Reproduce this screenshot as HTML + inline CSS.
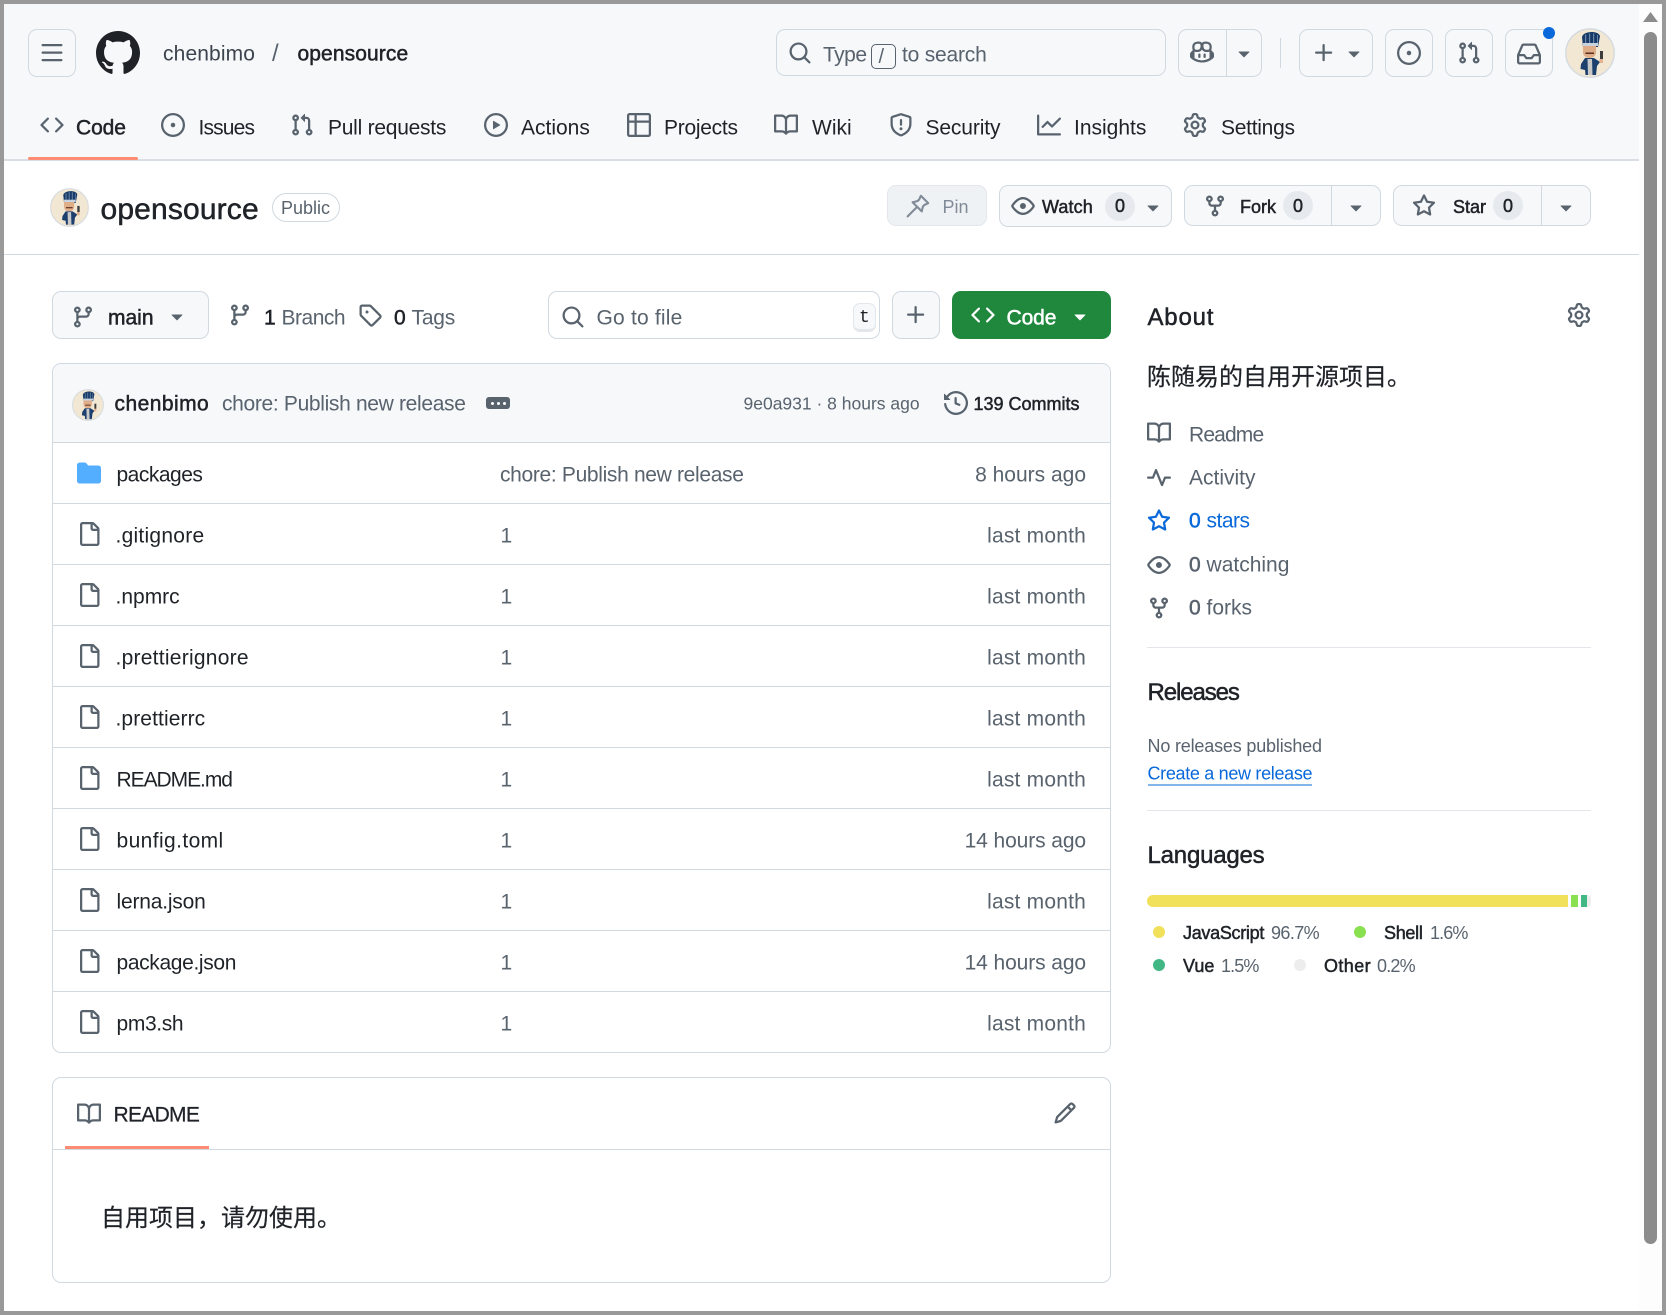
<!DOCTYPE html>
<html lang="en"><head><meta charset="utf-8"><title>opensource</title>
<style>
html,body{margin:0;padding:0;width:1666px;height:1315px;overflow:hidden;background:#fff}
body{position:relative;font-family:"Liberation Sans","Noto Sans CJK SC",sans-serif;color:#1f2328;font-size:21px}
.r{position:absolute;box-sizing:border-box}
.b{position:absolute;box-sizing:border-box;border:1.5px solid #d1d9e0;border-radius:9px;background:#f6f8fa}
.t{position:absolute;white-space:nowrap;line-height:1;transform:translateY(-50%)}
.s{-webkit-text-stroke:.5px currentColor}
.m{color:#59636e}
.bl{color:#0969da}
svg.i{position:absolute;width:24px;height:24px;fill:#59636e;overflow:visible}
.ln{position:absolute;height:1px;background:#d1d9e0}
.pill{position:absolute;background:#e6eaef;border-radius:15px}
.cn{font-family:"Noto Sans CJK SC","Liberation Sans",sans-serif;-webkit-text-stroke:.2px currentColor}
.dot{position:absolute;width:12px;height:12px;border-radius:50%}
.sm{font-size:18px}
</style></head><body>
<svg width="0" height="0" style="position:absolute">
<defs>
<symbol id="code" viewBox="0 0 16 16"><path d="m11.28 3.22 4.25 4.25a.75.75 0 0 1 0 1.06l-4.25 4.25a.749.749 0 0 1-1.275-.326.749.749 0 0 1 .215-.734L13.94 8l-3.72-3.72a.749.749 0 0 1 .326-1.275.749.749 0 0 1 .734.215Zm-6.56 0a.751.751 0 0 1 1.042.018.751.751 0 0 1 .018 1.042L2.06 8l3.72 3.72a.749.749 0 0 1-.326 1.275.749.749 0 0 1-.734-.215L.47 8.53a.75.75 0 0 1 0-1.06Z"/></symbol>
<symbol id="issue" viewBox="0 0 16 16"><path d="M8 9.5a1.5 1.5 0 1 0 0-3 1.5 1.5 0 0 0 0 3Z"/><path d="M8 0a8 8 0 1 1 0 16A8 8 0 0 1 8 0ZM1.5 8a6.5 6.5 0 1 0 13 0 6.5 6.5 0 0 0-13 0Z"/></symbol>
<symbol id="pr" viewBox="0 0 16 16"><path d="M1.5 3.25a2.25 2.25 0 1 1 3 2.122v5.256a2.251 2.251 0 1 1-1.5 0V5.372A2.25 2.25 0 0 1 1.5 3.25Zm5.677-.177L9.573.677A.25.25 0 0 1 10 .854V2.5h1A2.5 2.5 0 0 1 13.5 5v5.628a2.251 2.251 0 1 1-1.5 0V5a1 1 0 0 0-1-1h-1v1.646a.25.25 0 0 1-.427.177L7.177 3.427a.25.25 0 0 1 0-.354ZM3.75 2.5a.75.75 0 1 0 0 1.5.75.75 0 0 0 0-1.5Zm0 9.5a.75.75 0 1 0 0 1.5.75.75 0 0 0 0-1.5Zm8.25.75a.75.75 0 1 0 1.5 0 .75.75 0 0 0-1.5 0Z"/></symbol>
<symbol id="play" viewBox="0 0 16 16"><path d="M8 0a8 8 0 1 1 0 16A8 8 0 0 1 8 0ZM1.5 8a6.5 6.5 0 1 0 13 0 6.5 6.5 0 0 0-13 0Zm4.879-2.773 4.264 2.559a.25.25 0 0 1 0 .428l-4.264 2.559A.25.25 0 0 1 6 10.559V5.442a.25.25 0 0 1 .379-.215Z"/></symbol>
<symbol id="table" viewBox="0 0 16 16"><path d="M0 1.75C0 .784.784 0 1.75 0h12.5C15.216 0 16 .784 16 1.75v12.5A1.75 1.75 0 0 1 14.25 16H1.75A1.75 1.75 0 0 1 0 14.25ZM6.5 6.5v8h7.75a.25.25 0 0 0 .25-.25V6.5Zm8-1.5V1.75a.25.25 0 0 0-.25-.25H6.5V5Zm-13 1.5v7.75c0 .138.112.25.25.25H5v-8ZM5 5V1.5H1.75a.25.25 0 0 0-.25.25V5Z"/></symbol>
<symbol id="book" viewBox="0 0 16 16"><path d="M0 1.75A.75.75 0 0 1 .75 1h4.253c1.227 0 2.317.59 3 1.501A3.743 3.743 0 0 1 11.006 1h4.245a.75.75 0 0 1 .75.75v10.5a.75.75 0 0 1-.75.75h-4.507a2.25 2.25 0 0 0-1.591.659l-.622.621a.75.75 0 0 1-1.06 0l-.622-.621A2.25 2.25 0 0 0 5.258 13H.75a.75.75 0 0 1-.75-.75Zm7.251 10.324.004-5.073-.002-2.253A2.25 2.25 0 0 0 5.003 2.5H1.5v9h3.757a3.75 3.75 0 0 1 1.994.574ZM8.755 4.75l-.004 7.322a3.752 3.752 0 0 1 1.992-.572H14.5v-9h-3.495a2.25 2.25 0 0 0-2.25 2.25Z"/></symbol>
<symbol id="shield" viewBox="0 0 16 16"><path d="M7.467.133a1.748 1.748 0 0 1 1.066 0l5.25 1.68A1.75 1.75 0 0 1 15 3.48V7c0 1.566-.32 3.182-1.303 4.682-.983 1.498-2.585 2.813-5.032 3.855a1.697 1.697 0 0 1-1.33 0c-2.447-1.042-4.049-2.357-5.032-3.855C1.32 10.182 1 8.566 1 7V3.48a1.75 1.75 0 0 1 1.217-1.667Zm.61 1.429a.25.25 0 0 0-.153 0l-5.25 1.68a.25.25 0 0 0-.174.238V7c0 1.358.275 2.666 1.057 3.86.784 1.194 2.121 2.34 4.366 3.297a.196.196 0 0 0 .154 0c2.245-.956 3.582-2.104 4.366-3.298C13.225 9.666 13.5 8.36 13.5 7V3.48a.251.251 0 0 0-.174-.237l-5.25-1.68ZM8.75 4.75v3a.75.75 0 0 1-1.5 0v-3a.75.75 0 0 1 1.5 0ZM9 10.5a1 1 0 1 1-2 0 1 1 0 0 1 2 0Z"/></symbol>
<symbol id="graph" viewBox="0 0 16 16"><path d="M1.5 1.75V13.5h13.75a.75.75 0 0 1 0 1.5H.75a.75.75 0 0 1-.75-.75V1.75a.75.75 0 0 1 1.5 0Zm14.28 2.53-5.25 5.25a.75.75 0 0 1-1.06 0L7 7.06 4.28 9.78a.751.751 0 0 1-1.042-.018.751.751 0 0 1-.018-1.042l3.25-3.25a.75.75 0 0 1 1.06 0L10 7.94l4.72-4.72a.751.751 0 0 1 1.042.018.751.751 0 0 1 .018 1.042Z"/></symbol>
<symbol id="gear" viewBox="0 0 16 16"><path d="M8 0a8.2 8.2 0 0 1 .701.031C9.444.095 9.99.645 10.16 1.29l.288 1.107c.018.066.079.158.212.224.231.114.454.243.668.386.123.082.233.09.299.071l1.103-.303c.644-.176 1.392.021 1.82.63.27.385.506.792.704 1.218.315.675.111 1.422-.364 1.891l-.814.806c-.049.048-.098.147-.088.294.016.257.016.515 0 .772-.01.147.038.246.088.294l.814.806c.475.469.679 1.216.364 1.891a7.977 7.977 0 0 1-.704 1.217c-.428.61-1.176.807-1.82.63l-1.102-.302c-.067-.019-.177-.011-.3.071a5.909 5.909 0 0 1-.668.386c-.133.066-.194.158-.211.224l-.29 1.106c-.168.646-.715 1.196-1.458 1.26a8.006 8.006 0 0 1-1.402 0c-.743-.064-1.289-.614-1.458-1.26l-.289-1.106c-.018-.066-.079-.158-.212-.224a5.738 5.738 0 0 1-.668-.386c-.123-.082-.233-.09-.299-.071l-1.103.303c-.644.176-1.392-.021-1.82-.63a8.12 8.12 0 0 1-.704-1.218c-.315-.675-.111-1.422.363-1.891l.815-.806c.05-.048.098-.147.088-.294a6.214 6.214 0 0 1 0-.772c.01-.147-.038-.246-.088-.294l-.815-.806C.635 6.045.431 5.298.746 4.623a7.92 7.92 0 0 1 .704-1.217c.428-.61 1.176-.807 1.82-.63l1.102.302c.067.019.177.011.3-.071.214-.143.437-.272.668-.386.133-.066.194-.158.211-.224l.29-1.106C6.009.645 6.556.095 7.299.03 7.53.01 7.764 0 8 0Zm-.571 1.525c-.036.003-.108.036-.137.146l-.289 1.105c-.147.561-.549.967-.998 1.189-.173.086-.34.183-.5.29-.417.278-.97.423-1.529.27l-1.103-.303c-.109-.03-.175.016-.195.045-.22.312-.412.644-.573.99-.014.031-.021.11.059.19l.815.806c.411.406.562.957.53 1.456a4.709 4.709 0 0 0 0 .582c.032.499-.119 1.05-.53 1.456l-.815.806c-.081.08-.073.159-.059.19.162.346.353.677.573.989.02.03.085.076.195.046l1.102-.303c.56-.153 1.113-.008 1.53.27.161.107.328.204.501.29.447.222.85.629.997 1.189l.289 1.105c.029.109.101.143.137.146a6.6 6.6 0 0 0 1.142 0c.036-.003.108-.036.137-.146l.289-1.105c.147-.561.549-.967.998-1.189.173-.086.34-.183.5-.29.417-.278.97-.423 1.529-.27l1.103.303c.109.029.175-.016.195-.045.22-.313.411-.644.573-.99.014-.031.021-.11-.059-.19l-.815-.806c-.411-.406-.562-.957-.53-1.456a4.709 4.709 0 0 0 0-.582c-.032-.499.119-1.05.53-1.456l.815-.806c.081-.08.073-.159.059-.19a6.464 6.464 0 0 0-.573-.989c-.02-.03-.085-.076-.195-.046l-1.102.303c-.56.153-1.113.008-1.53-.27a4.44 4.44 0 0 0-.501-.29c-.447-.222-.85-.629-.997-1.189l-.289-1.105c-.029-.11-.101-.143-.137-.146a6.6 6.6 0 0 0-1.142 0ZM11 8a3 3 0 1 1-6 0 3 3 0 0 1 6 0ZM9.5 8a1.5 1.5 0 1 0-3.001.001A1.5 1.5 0 0 0 9.5 8Z"/></symbol>
<symbol id="gh" viewBox="0 0 16 16"><path d="M8 0c4.42 0 8 3.58 8 8a8.013 8.013 0 0 1-5.45 7.59c-.4.08-.55-.17-.55-.38 0-.27.01-1.13.01-2.2 0-.75-.25-1.23-.54-1.48 1.78-.2 3.65-.88 3.65-3.95 0-.88-.31-1.59-.82-2.15.08-.2.36-1.02-.08-2.12 0 0-.67-.22-2.2.82-.64-.18-1.32-.27-2-.27-.68 0-1.36.09-2 .27-1.53-1.03-2.2-.82-2.2-.82-.44 1.1-.16 1.92-.08 2.12-.51.56-.82 1.28-.82 2.15 0 3.06 1.86 3.75 3.64 3.95-.23.2-.44.55-.51 1.07-.46.21-1.61.55-2.33-.66-.15-.24-.6-.83-1.23-.82-.67.01-.27.38.01.53.34.19.73.9.82 1.13.16.45.68 1.31 2.69.94 0 .67.01 1.3.01 1.49 0 .21-.15.45-.55.38A7.995 7.995 0 0 1 0 8c0-4.42 3.58-8 8-8Z"/></symbol>
<symbol id="bars" viewBox="0 0 16 16"><path d="M1 2.75A.75.75 0 0 1 1.75 2h12.5a.75.75 0 0 1 0 1.5H1.75A.75.75 0 0 1 1 2.75Zm0 5A.75.75 0 0 1 1.75 7h12.5a.75.75 0 0 1 0 1.5H1.75A.75.75 0 0 1 1 7.75ZM1.75 12h12.5a.75.75 0 0 1 0 1.5H1.75a.75.75 0 0 1 0-1.5Z"/></symbol>
<symbol id="search" viewBox="0 0 16 16"><path d="M10.68 11.74a6 6 0 0 1-7.922-8.982 6 6 0 0 1 8.982 7.922l3.04 3.04a.749.749 0 0 1-.326 1.275.749.749 0 0 1-.734-.215ZM11.5 7a4.499 4.499 0 1 0-8.997 0A4.499 4.499 0 0 0 11.5 7Z"/></symbol>
<symbol id="copilot" viewBox="0 0 16 16"><path d="M7.998 15.035c-4.562 0-7.873-2.914-7.998-3.749V9.338c.085-.628.677-1.686 1.588-2.065.013-.07.024-.143.036-.218.029-.183.06-.384.126-.612-.201-.508-.254-1.084-.254-1.656 0-.87.128-1.769.693-2.484.579-.733 1.494-1.124 2.724-1.261 1.206-.134 2.262.034 2.944.765.05.053.096.108.139.165.044-.057.094-.112.143-.165.682-.731 1.738-.899 2.944-.765 1.23.137 2.145.528 2.724 1.261.566.715.693 1.614.693 2.484 0 .572-.053 1.148-.254 1.656.066.228.098.429.126.612.012.076.024.148.037.218.924.385 1.522 1.471 1.591 2.095v1.872c0 .766-3.351 3.795-8.002 3.795Zm0-1.485c2.28 0 4.584-1.11 5.002-1.433V7.862l-.023-.116c-.49.21-1.075.291-1.727.291-1.146 0-2.059-.327-2.71-.991A3.222 3.222 0 0 1 8 6.303a3.24 3.24 0 0 1-.544.743c-.65.664-1.563.991-2.71.991-.652 0-1.236-.081-1.727-.291l-.023.116v4.255c.419.323 2.722 1.433 5.002 1.433ZM6.762 2.83c-.193-.206-.637-.413-1.682-.297-1.019.113-1.479.404-1.713.7-.247.312-.369.789-.369 1.554 0 .793.129 1.171.308 1.371.162.181.519.379 1.442.379.853 0 1.339-.235 1.638-.54.315-.322.527-.827.617-1.553.117-.935-.037-1.395-.241-1.614Zm4.155-.297c-1.044-.116-1.488.091-1.681.297-.204.219-.359.679-.242 1.614.091.726.303 1.231.618 1.553.299.305.784.54 1.638.54.922 0 1.28-.198 1.442-.379.179-.2.308-.578.308-1.371 0-.765-.123-1.242-.37-1.554-.233-.296-.693-.587-1.713-.7Z"/><path d="M6.25 9.037a.75.75 0 0 1 .75.75v1.501a.75.75 0 0 1-1.5 0V9.787a.75.75 0 0 1 .75-.75Zm4.25.75v1.501a.75.75 0 0 1-1.5 0V9.787a.75.75 0 0 1 1.5 0Z"/></symbol>
<symbol id="plus" viewBox="0 0 16 16"><path d="M7.75 2a.75.75 0 0 1 .75.75V7h4.25a.75.75 0 0 1 0 1.5H8.5v4.25a.75.75 0 0 1-1.5 0V8.5H2.75a.75.75 0 0 1 0-1.5H7V2.75A.75.75 0 0 1 7.75 2Z"/></symbol>
<symbol id="inbox" viewBox="0 0 16 16"><path d="M2.8 2.06A1.75 1.75 0 0 1 4.41 1h7.18c.7 0 1.333.417 1.61 1.06l2.74 6.395c.04.093.06.194.06.295v4.5A1.75 1.75 0 0 1 14.25 15H1.75A1.75 1.75 0 0 1 0 13.25v-4.5c0-.101.02-.202.06-.295Zm1.61.44a.25.25 0 0 0-.23.152L1.887 8H4.75a.75.75 0 0 1 .6.3L6.625 10h2.75l1.275-1.7a.75.75 0 0 1 .6-.3h2.863L11.82 2.652a.25.25 0 0 0-.23-.152Zm10.09 7h-2.875l-1.275 1.7a.75.75 0 0 1-.6.3h-3.5a.75.75 0 0 1-.6-.3L4.375 9.5H1.5v3.75c0 .138.112.25.25.25h12.5a.25.25 0 0 0 .25-.25Z"/></symbol>
<symbol id="pin" viewBox="0 0 16 16"><path fill="none" stroke="#818b98" stroke-width="1.4" stroke-linecap="round" stroke-linejoin="round" d="M9.9 1.2 14.8 6.1 12.6 7.1C11.8 7.5 11.3 8.2 11.1 9L10.5 11.6 4.4 5.5 7 4.9C7.8 4.7 8.5 4.2 8.9 3.4ZM7.4 8.6 1.1 14.9"/></symbol>
<symbol id="eye" viewBox="0 0 16 16"><path d="M8 2c1.981 0 3.671.992 4.933 2.078 1.27 1.091 2.187 2.345 2.637 3.023a1.62 1.62 0 0 1 0 1.798c-.45.678-1.367 1.932-2.637 3.023C11.67 13.008 9.981 14 8 14c-1.981 0-3.671-.992-4.933-2.078C1.797 10.83.88 9.576.43 8.898a1.62 1.62 0 0 1 0-1.798c.45-.677 1.367-1.931 2.637-3.022C4.33 2.992 6.019 2 8 2ZM1.679 7.932a.12.12 0 0 0 0 .136c.411.622 1.241 1.75 2.366 2.717C5.176 11.758 6.527 12.5 8 12.5c1.473 0 2.825-.742 3.955-1.715 1.124-.967 1.954-2.096 2.366-2.717a.12.12 0 0 0 0-.136c-.412-.621-1.242-1.75-2.366-2.717C10.824 4.242 9.473 3.5 8 3.5c-1.473 0-2.825.742-3.955 1.715-1.124.967-1.954 2.096-2.366 2.717ZM8 10a2 2 0 1 1-.001-3.999A2 2 0 0 1 8 10Z"/></symbol>
<symbol id="fork" viewBox="0 0 16 16"><path d="M5 5.372v.878c0 .414.336.75.75.75h4.5a.75.75 0 0 0 .75-.75v-.878a2.25 2.25 0 1 1 1.5 0v.878a2.25 2.25 0 0 1-2.25 2.25h-1.5v2.128a2.251 2.251 0 1 1-1.5 0V8.5h-1.5A2.25 2.25 0 0 1 3.5 6.25v-.878a2.25 2.25 0 1 1 1.5 0ZM5 3.25a.75.75 0 1 0-1.5 0 .75.75 0 0 0 1.5 0Zm6.75.75a.75.75 0 1 0 0-1.5.75.75 0 0 0 0 1.5Zm-3 8.75a.75.75 0 1 0-1.5 0 .75.75 0 0 0 1.5 0Z"/></symbol>
<symbol id="star" viewBox="0 0 16 16"><path d="M8 .25a.75.75 0 0 1 .673.418l1.882 3.815 4.21.612a.75.75 0 0 1 .416 1.279l-3.046 2.97.719 4.192a.751.751 0 0 1-1.088.791L8 12.347l-3.766 1.98a.75.75 0 0 1-1.088-.79l.72-4.194L.818 6.374a.75.75 0 0 1 .416-1.28l4.21-.611L7.327.668A.75.75 0 0 1 8 .25Zm0 2.445L6.615 5.5a.75.75 0 0 1-.564.41l-3.097.45 2.24 2.184a.75.75 0 0 1 .216.664l-.528 3.084 2.769-1.456a.75.75 0 0 1 .698 0l2.77 1.456-.53-3.084a.75.75 0 0 1 .216-.664l2.24-2.183-3.096-.45a.75.75 0 0 1-.564-.41L8 2.694Z"/></symbol>
<symbol id="branch" viewBox="0 0 16 16"><path d="M9.5 3.25a2.25 2.25 0 1 1 3 2.122V6A2.5 2.5 0 0 1 10 8.5H6a1 1 0 0 0-1 1v1.128a2.251 2.251 0 1 1-1.5 0V5.372a2.25 2.25 0 1 1 1.5 0v1.836A2.493 2.493 0 0 1 6 7h4a1 1 0 0 0 1-1v-.628A2.25 2.25 0 0 1 9.5 3.25Zm-6 0a.75.75 0 1 0 1.5 0 .75.75 0 0 0-1.5 0Zm8.25-.75a.75.75 0 1 0 0 1.5.75.75 0 0 0 0-1.5ZM4.25 12a.75.75 0 1 0 0 1.5.75.75 0 0 0 0-1.5Z"/></symbol>
<symbol id="tag" viewBox="0 0 16 16"><path d="M1 7.775V2.75C1 1.784 1.784 1 2.75 1h5.025c.464 0 .91.184 1.238.513l6.25 6.25a1.75 1.75 0 0 1 0 2.474l-5.026 5.026a1.75 1.75 0 0 1-2.474 0l-6.25-6.25A1.752 1.752 0 0 1 1 7.775Zm1.5 0c0 .066.026.13.073.177l6.25 6.25a.25.25 0 0 0 .354 0l5.025-5.025a.25.25 0 0 0 0-.354l-6.25-6.25a.25.25 0 0 0-.177-.073H2.75a.25.25 0 0 0-.25.25ZM6 5a1 1 0 1 1 0 2 1 1 0 0 1 0-2Z"/></symbol>
<symbol id="history" viewBox="0 0 16 16"><path d="m.427 1.927 1.215 1.215a8.002 8.002 0 1 1-1.6 5.685.75.75 0 1 1 1.493-.154 6.5 6.5 0 1 0 1.18-4.458l1.358 1.358A.25.25 0 0 1 3.896 6H.25A.25.25 0 0 1 0 5.75V2.104a.25.25 0 0 1 .427-.177ZM7.75 4a.75.75 0 0 1 .75.75v2.992l2.028.812a.75.75 0 0 1-.557 1.392l-2.5-1A.751.751 0 0 1 7 8.25v-3.5A.75.75 0 0 1 7.75 4Z"/></symbol>
<symbol id="folder" viewBox="0 0 16 16"><path fill="#54aeff" d="M1.75 1A1.75 1.75 0 0 0 0 2.75v10.5C0 14.216.784 15 1.75 15h12.5A1.75 1.75 0 0 0 16 13.25v-8.5A1.75 1.75 0 0 0 14.25 3H7.5a.25.25 0 0 1-.2-.1l-.9-1.2C6.07 1.26 5.55 1 5 1H1.75Z"/></symbol>
<symbol id="file" viewBox="0 0 16 16"><path d="M2 1.75C2 .784 2.784 0 3.75 0h6.586c.464 0 .909.184 1.237.513l2.914 2.914c.329.328.513.773.513 1.237v9.586A1.75 1.75 0 0 1 13.25 16h-9.5A1.75 1.75 0 0 1 2 14.25Zm1.75-.25a.25.25 0 0 0-.25.25v12.5c0 .138.112.25.25.25h9.5a.25.25 0 0 0 .25-.25V6h-2.75A1.75 1.75 0 0 1 9 4.25V1.5Zm6.75.062V4.25c0 .138.112.25.25.25h2.688l-.011-.013-2.914-2.914-.013-.011Z"/></symbol>
<symbol id="pulse" viewBox="0 0 16 16"><path d="M6 2c.306 0 .582.187.696.471L10 10.731l1.304-3.26A.751.751 0 0 1 12 7h3.25a.75.75 0 0 1 0 1.5h-2.742l-1.812 4.528a.751.751 0 0 1-1.392 0L6 4.77 4.696 8.03A.75.75 0 0 1 4 8.5H.75a.75.75 0 0 1 0-1.5h2.742l1.812-4.529A.751.751 0 0 1 6 2Z"/></symbol>
<symbol id="pencil" viewBox="0 0 16 16"><path d="M11.013 1.427a1.75 1.75 0 0 1 2.474 0l1.086 1.086a1.75 1.75 0 0 1 0 2.474l-8.61 8.61c-.21.21-.47.364-.756.445l-3.251.93a.75.75 0 0 1-.927-.928l.929-3.25c.081-.286.235-.547.445-.758l8.61-8.61Zm.176 4.823L9.75 4.81l-6.286 6.287a.253.253 0 0 0-.064.108l-.558 1.953 1.953-.558a.253.253 0 0 0 .108-.064Zm1.238-3.763a.25.25 0 0 0-.354 0L10.811 3.75l1.439 1.44 1.263-1.263a.25.25 0 0 0 0-.354Z"/></symbol>
<symbol id="caret" viewBox="0 0 16 16"><path d="m4.427 7.427 3.396 3.396a.25.25 0 0 0 .354 0l3.396-3.396A.25.25 0 0 0 11.396 7H4.604a.25.25 0 0 0-.177.427Z"/></symbol>
<symbol id="av" viewBox="0 0 50 50">
<circle cx="25" cy="25" r="24.2" fill="#f2e7d3" stroke="#d5dae0" stroke-width="1.4"/>
<path fill="#173a68" d="M17 9C18 3 33 2 35 8L33 19H18Z"/>
<path fill="#6d87a8" d="M20 6.5h1.2V15H20ZM24 5.5h1.2V15H24ZM28 5.5h1.2V15H28ZM32 7h1V15h-1Z"/>
<path fill="#c9d3df" d="M18 15H33V18H18Z"/>
<path fill="#dfae88" d="M18 18H31V25C30 29 27 30 24.5 30 22 30 19 29 18 25Z"/>
<path fill="#5a2f22" d="M20.5 24.5H29V26H20.5Z"/>
<path fill="#1c3f6e" d="M20 30 16 36 15.500 41 20 42 20.500 47H31L32 38 35 34 29 30Z"/>
<path fill="#c8c8c8" d="M22.500 31H27L27.500 47H23Z"/>
<path fill="#3c3c3c" d="M35 23H38V31H35Z"/>
<path fill="#e3b48f" d="M34.500 31H38V35H34.500Z"/>
</symbol>
</defs></svg>

<!-- header bg -->
<div class="r" style="left:4px;top:4px;width:1635px;height:155px;background:#f6f8fa"></div>
<div class="ln" style="left:4px;top:159px;width:1635px;height:2px;background:#d8dee4"></div>
<div class="r" style="left:28px;top:157px;width:110px;height:3px;background:#fd8c73;border-radius:2px"></div>

<!-- top row -->
<div class="b" style="left:28px;top:29px;width:48px;height:48px"></div>
<svg class="i" viewBox="0 0 16 16" style="left:40px;top:41px"><use href="#bars"/></svg>
<svg class="i" viewBox="0 0 16 16" style="left:96px;top:31px;width:44px;height:44px;fill:#1f2328"><use href="#gh"/></svg>
<span class="t" style="left:163px;top:54px;color:#3c444d;letter-spacing:.13px">chenbimo</span>
<span class="t" style="left:272px;top:54px;color:#59636e;font-size:24px">/</span>
<span class="t s" style="left:297.5px;top:54px;letter-spacing:.1px">opensource</span>

<div class="b" style="left:776px;top:29px;width:390px;height:47px;border-radius:9px"></div>
<svg class="i" viewBox="0 0 16 16" style="left:788px;top:41px"><use href="#search"/></svg>
<span class="t m" style="left:823px;top:55px;letter-spacing:-.5px">Type</span>
<div class="r" style="left:871px;top:44px;width:25px;height:25px;border:1.5px solid #59636e;border-radius:5px"></div>
<span class="t m" style="left:878.500px;top:56.500px;font-size:20px">/</span>
<span class="t m" style="left:902px;top:55px;letter-spacing:-.2px">to search</span>

<div class="b" style="left:1178px;top:29px;width:84px;height:48px"></div>
<div class="r" style="left:1226px;top:29px;width:1px;height:48px;background:#d1d9e0"></div>
<svg class="i" viewBox="0 0 16 16" style="left:1190px;top:40px"><use href="#copilot"/></svg>
<svg class="i" viewBox="0 0 16 16" style="left:1232px;top:41px"><use href="#caret"/></svg>
<div class="r" style="left:1280px;top:38px;width:1px;height:30px;background:#d1d9e0"></div>
<div class="b" style="left:1299px;top:29px;width:74px;height:48px"></div>
<svg class="i" viewBox="0 0 16 16" style="left:1312px;top:41px"><use href="#plus"/></svg>
<svg class="i" viewBox="0 0 16 16" style="left:1342px;top:41px"><use href="#caret"/></svg>
<div class="b" style="left:1385px;top:29px;width:48px;height:48px"></div>
<svg class="i" viewBox="0 0 16 16" style="left:1397px;top:41px"><use href="#issue"/></svg>
<div class="b" style="left:1445px;top:29px;width:48px;height:48px"></div>
<svg class="i" viewBox="0 0 16 16" style="left:1457px;top:41px"><use href="#pr"/></svg>
<div class="b" style="left:1505px;top:29px;width:48px;height:48px"></div>
<svg class="i" viewBox="0 0 16 16" style="left:1517px;top:42px"><use href="#inbox"/></svg>
<div class="r" style="left:1543px;top:27px;width:12px;height:12px;border-radius:50%;background:#0969da"></div>
<svg class="i" viewBox="0 0 50 50" style="left:1565px;top:28px;width:50px;height:50px"><use href="#av"/></svg>

<!-- tabs -->
<svg class="i" viewBox="0 0 16 16" style="left:40px;top:113px"><use href="#code"/></svg>
<span class="t s" style="left:76px;top:127.500px;letter-spacing:-.1px">Code</span>
<svg class="i" viewBox="0 0 16 16" style="left:161px;top:113px"><use href="#issue"/></svg>
<span class="t" style="left:198.500px;top:127.500px;letter-spacing:-.85px">Issues</span>
<svg class="i" viewBox="0 0 16 16" style="left:290px;top:113px"><use href="#pr"/></svg>
<span class="t" style="left:328px;top:127.500px;letter-spacing:-.25px">Pull requests</span>
<svg class="i" viewBox="0 0 16 16" style="left:484px;top:113px"><use href="#play"/></svg>
<span class="t" style="left:521px;top:127.500px">Actions</span>
<svg class="i" viewBox="0 0 16 16" style="left:627px;top:113px"><use href="#table"/></svg>
<span class="t" style="left:664px;top:127.500px;letter-spacing:-.27px">Projects</span>
<svg class="i" viewBox="0 0 16 16" style="left:774px;top:113px"><use href="#book"/></svg>
<span class="t" style="left:812px;top:127.500px">Wiki</span>
<svg class="i" viewBox="0 0 16 16" style="left:889px;top:113px"><use href="#shield"/></svg>
<span class="t" style="left:925.500px;top:127.500px;letter-spacing:-.13px">Security</span>
<svg class="i" viewBox="0 0 16 16" style="left:1037px;top:113px"><use href="#graph"/></svg>
<span class="t" style="left:1074px;top:127.500px">Insights</span>
<svg class="i" viewBox="0 0 16 16" style="left:1183px;top:113px"><use href="#gear"/></svg>
<span class="t" style="left:1221px;top:127.500px;letter-spacing:-.27px">Settings</span>

<!-- repo head -->
<svg class="i" viewBox="0 0 50 50" style="left:50px;top:188px;width:39px;height:39px"><use href="#av"/></svg>
<span class="t s" style="left:100.500px;top:210px;font-size:30px;letter-spacing:.15px">opensource</span>
<div class="r" style="left:271.500px;top:193px;width:68px;height:29px;border:1.5px solid #d1d9e0;border-radius:15px"></div>
<span class="t m" style="left:281px;top:208px;font-size:18px">Public</span>
<div class="ln" style="left:4px;top:254px;width:1635px"></div>

<div class="b" style="left:886.500px;top:185px;width:100px;height:41px;background:#eff2f5;border-color:#e3e7ec"></div>
<svg class="i" viewBox="0 0 16 16" style="left:906px;top:194px"><use href="#pin"/></svg>
<span class="t" style="left:942.500px;top:207px;font-size:18px;color:#818b98">Pin</span>

<div class="b" style="left:998.500px;top:185px;width:173px;height:42px"></div>
<svg class="i" viewBox="0 0 16 16" style="left:1011px;top:194px"><use href="#eye"/></svg>
<span class="t s" style="left:1042px;top:207px;font-size:18px;letter-spacing:.1px">Watch</span>
<div class="pill" style="left:1105px;top:192px;width:30px;height:29px"></div>
<span class="t s" style="left:1115px;top:206px;font-size:18px">0</span>
<svg class="i" viewBox="0 0 16 16" style="left:1141px;top:195px"><use href="#caret"/></svg>

<div class="b" style="left:1183.500px;top:185px;width:197px;height:41px"></div>
<div class="r" style="left:1331px;top:185px;width:1px;height:41px;background:#d1d9e0"></div>
<svg class="i" viewBox="0 0 16 16" style="left:1203px;top:194px"><use href="#fork"/></svg>
<span class="t s" style="left:1240px;top:207px;font-size:18px">Fork</span>
<div class="pill" style="left:1283px;top:191px;width:30px;height:29px"></div>
<span class="t s" style="left:1293px;top:205.500px;font-size:18px">0</span>
<svg class="i" viewBox="0 0 16 16" style="left:1344px;top:195px"><use href="#caret"/></svg>

<div class="b" style="left:1392.500px;top:185px;width:198px;height:41px"></div>
<div class="r" style="left:1541px;top:185px;width:1px;height:41px;background:#d1d9e0"></div>
<svg class="i" viewBox="0 0 16 16" style="left:1412px;top:194px"><use href="#star"/></svg>
<span class="t s" style="left:1453px;top:207px;font-size:18px">Star</span>
<div class="pill" style="left:1493px;top:191px;width:30px;height:29px"></div>
<span class="t s" style="left:1503px;top:205.500px;font-size:18px">0</span>
<svg class="i" viewBox="0 0 16 16" style="left:1554px;top:195px"><use href="#caret"/></svg>

<!-- toolbar -->
<div class="b" style="left:52px;top:291px;width:157px;height:48px"></div>
<svg class="i" viewBox="0 0 16 16" style="left:71px;top:305px"><use href="#branch"/></svg>
<span class="t s" style="left:108px;top:317.500px">main</span>
<svg class="i" viewBox="0 0 16 16" style="left:165px;top:304px"><use href="#caret"/></svg>
<svg class="i" viewBox="0 0 16 16" style="left:228px;top:303px"><use href="#branch"/></svg>
<span class="t m" style="left:264px;top:317.500px"><span class="s" style="color:#1f2328">1</span> <span style="letter-spacing:-.5px">Branch</span></span>
<svg class="i" viewBox="0 0 16 16" style="left:357.500px;top:303px"><use href="#tag"/></svg>
<span class="t m" style="left:394px;top:317.500px"><span class="s" style="color:#1f2328">0</span> <span style="letter-spacing:-.2px">Tags</span></span>

<div class="b" style="left:548px;top:291px;width:332px;height:48px;background:#fff"></div>
<svg class="i" viewBox="0 0 16 16" style="left:561px;top:305px"><use href="#search"/></svg>
<span class="t m" style="left:596.500px;top:317.500px;letter-spacing:.2px">Go to file</span>
<div class="r" style="left:853px;top:303px;width:22.5px;height:29px;border:1.5px solid #e3e7ec;border-bottom-width:3px;border-radius:7px;background:#f6f8fa"></div>
<span class="t" style="left:859px;top:318px;font-size:18px;font-family:'Liberation Mono',monospace;color:#1f2328">t</span>
<div class="b" style="left:892px;top:291px;width:48px;height:48px"></div>
<svg class="i" viewBox="0 0 16 16" style="left:904px;top:303px"><use href="#plus"/></svg>
<div class="r" style="left:952px;top:291px;width:159px;height:48px;background:#1f883d;border-radius:9px"></div>
<svg class="i" viewBox="0 0 16 16" style="left:971px;top:303px;fill:#fff"><use href="#code"/></svg>
<span class="t s" style="left:1006.500px;top:317.500px;color:#fff;letter-spacing:-.1px">Code</span>
<svg class="i" viewBox="0 0 16 16" style="left:1068px;top:304px;fill:#fff"><use href="#caret"/></svg>

<!-- file box -->
<div class="r" style="left:52px;top:363px;width:1059px;height:690px;border:1px solid #d1d9e0;border-radius:9px"></div>
<div class="r" style="left:53px;top:364px;width:1057px;height:78px;background:#f6f8fa;border-radius:8px 8px 0 0"></div>
<div class="ln" style="left:53px;top:442px;width:1057px"></div>
<div class="ln" style="left:53px;top:503px;width:1057px"></div>
<div class="ln" style="left:53px;top:564px;width:1057px"></div>
<div class="ln" style="left:53px;top:625px;width:1057px"></div>
<div class="ln" style="left:53px;top:686px;width:1057px"></div>
<div class="ln" style="left:53px;top:747px;width:1057px"></div>
<div class="ln" style="left:53px;top:808px;width:1057px"></div>
<div class="ln" style="left:53px;top:869px;width:1057px"></div>
<div class="ln" style="left:53px;top:930px;width:1057px"></div>
<div class="ln" style="left:53px;top:991px;width:1057px"></div>

<svg class="i" viewBox="0 0 50 50" style="left:72px;top:389px;width:32px;height:32px"><use href="#av"/></svg>
<span class="t s" style="left:114.500px;top:404px;letter-spacing:.45px">chenbimo</span>
<span class="t m" style="left:222px;top:404px;letter-spacing:-.33px">chore: Publish new release</span>
<div class="r" style="left:486px;top:397px;width:24px;height:12px;background:#59636e;border-radius:3px"></div>
<div class="r" style="left:491px;top:402px;width:3px;height:3px;background:#fff;border-radius:50%"></div>
<div class="r" style="left:497px;top:402px;width:3px;height:3px;background:#fff;border-radius:50%"></div>
<div class="r" style="left:503px;top:402px;width:3px;height:3px;background:#fff;border-radius:50%"></div>
<span class="t m" style="left:743.500px;top:404px;font-size:17.5px">9e0a931 · 8 hours ago</span>
<svg class="i" viewBox="0 0 16 16" style="left:943.500px;top:391px"><use href="#history"/></svg>
<span class="t s" style="left:973.500px;top:404px;font-size:18px">139 Commits</span>

<svg class="i" viewBox="0 0 16 16" style="left:77px;top:461px"><use href="#folder"/></svg>
<span class="t" style="left:116.500px;top:474.500px;letter-spacing:-.5px">packages</span>
<span class="t m" style="left:500px;top:474.500px;letter-spacing:-.33px">chore: Publish new release</span>
<span class="t m" style="right:580px;top:474.500px">8 hours ago</span>

<svg class="i" viewBox="0 0 16 16" style="left:77px;top:522px"><use href="#file"/></svg>
<span class="t" style="left:115.500px;top:535.500px;letter-spacing:.25px">.gitignore</span><span class="t m" style="left:500.500px;top:535.500px">1</span><span class="t m" style="right:580px;top:535.500px;letter-spacing:.2px">last month</span>
<svg class="i" viewBox="0 0 16 16" style="left:77px;top:583px"><use href="#file"/></svg>
<span class="t" style="left:115.500px;top:596.500px">.npmrc</span><span class="t m" style="left:500.500px;top:596.500px">1</span><span class="t m" style="right:580px;top:596.500px;letter-spacing:.2px">last month</span>
<svg class="i" viewBox="0 0 16 16" style="left:77px;top:644px"><use href="#file"/></svg>
<span class="t" style="left:115.500px;top:657.500px;letter-spacing:.25px">.prettierignore</span><span class="t m" style="left:500.500px;top:657.500px">1</span><span class="t m" style="right:580px;top:657.500px;letter-spacing:.2px">last month</span>
<svg class="i" viewBox="0 0 16 16" style="left:77px;top:705px"><use href="#file"/></svg>
<span class="t" style="left:115.500px;top:718.500px;letter-spacing:.1px">.prettierrc</span><span class="t m" style="left:500.500px;top:718.500px">1</span><span class="t m" style="right:580px;top:718.500px;letter-spacing:.2px">last month</span>
<svg class="i" viewBox="0 0 16 16" style="left:77px;top:766px"><use href="#file"/></svg>
<span class="t" style="left:116.500px;top:779.500px;letter-spacing:-1.05px">README.md</span><span class="t m" style="left:500.500px;top:779.500px">1</span><span class="t m" style="right:580px;top:779.500px;letter-spacing:.2px">last month</span>
<svg class="i" viewBox="0 0 16 16" style="left:77px;top:827px"><use href="#file"/></svg>
<span class="t" style="left:116.500px;top:840.500px;letter-spacing:.4px">bunfig.toml</span><span class="t m" style="left:500.500px;top:840.500px">1</span><span class="t m" style="right:580px;top:840.500px;letter-spacing:-.1px">14 hours ago</span>
<svg class="i" viewBox="0 0 16 16" style="left:77px;top:888px"><use href="#file"/></svg>
<span class="t" style="left:116.500px;top:901.500px;letter-spacing:-.2px">lerna.json</span><span class="t m" style="left:500.500px;top:901.500px">1</span><span class="t m" style="right:580px;top:901.500px;letter-spacing:.2px">last month</span>
<svg class="i" viewBox="0 0 16 16" style="left:77px;top:949px"><use href="#file"/></svg>
<span class="t" style="left:116.500px;top:962.500px;letter-spacing:-.35px">package.json</span><span class="t m" style="left:500.500px;top:962.500px">1</span><span class="t m" style="right:580px;top:962.500px;letter-spacing:-.1px">14 hours ago</span>
<svg class="i" viewBox="0 0 16 16" style="left:77px;top:1010px"><use href="#file"/></svg>
<span class="t" style="left:116.500px;top:1023.500px;letter-spacing:-.35px">pm3.sh</span><span class="t m" style="left:500.500px;top:1023.500px">1</span><span class="t m" style="right:580px;top:1023.500px;letter-spacing:.2px">last month</span>

<!-- readme -->
<div class="r" style="left:52px;top:1077px;width:1059px;height:206px;border:1px solid #d1d9e0;border-radius:9px"></div>
<div class="ln" style="left:53px;top:1149px;width:1057px"></div>
<div class="r" style="left:65px;top:1146px;width:144px;height:3px;background:#fd8c73"></div>
<svg class="i" viewBox="0 0 16 16" style="left:77px;top:1102px"><use href="#book"/></svg>
<span class="t" style="left:113.500px;top:1115px;-webkit-text-stroke:.25px currentColor;letter-spacing:-.7px">README</span>
<svg class="i" viewBox="0 0 16 16" style="left:1053px;top:1101px"><use href="#pencil"/></svg>
<span class="t cn" style="left:101px;top:1216px;font-size:24px">自用项目，请勿使用。</span>

<!-- sidebar -->
<span class="t s" style="left:1147.500px;top:317.500px;font-size:24px;letter-spacing:.8px">About</span>
<svg class="i" viewBox="0 0 16 16" style="left:1567px;top:303px"><use href="#gear"/></svg>
<span class="t cn" style="left:1147px;top:375px;font-size:24px">陈随易的自用开源项目。</span>
<svg class="i" viewBox="0 0 16 16" style="left:1147px;top:421px"><use href="#book"/></svg>
<span class="t m" style="left:1189px;top:434.500px;letter-spacing:-.85px">Readme</span>
<svg class="i" viewBox="0 0 16 16" style="left:1147px;top:466px"><use href="#pulse"/></svg>
<span class="t m" style="left:1189px;top:478px">Activity</span>
<svg class="i" viewBox="0 0 16 16" style="left:1147px;top:509px;fill:#0969da"><use href="#star"/></svg>
<span class="t bl" style="left:1189px;top:521px"><span class="s">0</span> <span style="letter-spacing:-.5px">stars</span></span>
<svg class="i" viewBox="0 0 16 16" style="left:1147px;top:553px"><use href="#eye"/></svg>
<span class="t m" style="left:1189px;top:565px"><span class="s">0</span> watching</span>
<svg class="i" viewBox="0 0 16 16" style="left:1147px;top:596px"><use href="#fork"/></svg>
<span class="t m" style="left:1189px;top:608px"><span class="s">0</span> forks</span>
<div class="r" style="left:1147px;top:647px;width:444px;height:1px;background:#e3e7ec"></div>

<span class="t s" style="left:1147.500px;top:693px;font-size:24px;letter-spacing:-1.1px">Releases</span>
<span class="t m sm" style="left:1147.500px;top:746px;letter-spacing:-.18px">No releases published</span>
<span class="t bl sm" style="left:1147.500px;top:775px;border-bottom:1.5px solid #0969da;padding-bottom:2px;letter-spacing:-.32px">Create a new release</span>
<div class="r" style="left:1147px;top:810px;width:444px;height:1px;background:#e3e7ec"></div>

<span class="t s" style="left:1147.500px;top:856px;font-size:24px;letter-spacing:-.2px">Languages</span>
<div class="r" style="left:1147px;top:895px;width:421px;height:12px;background:#f1e05a;border-radius:6px 0 0 6px"></div>
<div class="r" style="left:1571px;top:895px;width:7px;height:12px;background:#89e051"></div>
<div class="r" style="left:1580.500px;top:895px;width:6.5px;height:12px;background:#41b883"></div>
<div class="r" style="left:1587px;top:895px;width:4px;height:12px;background:#ededed;border-radius:0 6px 6px 0"></div>

<div class="dot" style="left:1153px;top:926px;background:#f1e05a"></div>
<span class="t s sm" style="left:1183px;top:933px;letter-spacing:-.3px">JavaScript</span>
<span class="t m sm" style="left:1271px;top:933px;letter-spacing:-.6px">96.7%</span>
<div class="dot" style="left:1354px;top:926px;background:#89e051"></div>
<span class="t s sm" style="left:1384px;top:933px;letter-spacing:-.3px">Shell</span>
<span class="t m sm" style="left:1430px;top:933px;letter-spacing:-.9px">1.6%</span>
<div class="dot" style="left:1153px;top:959px;background:#41b883"></div>
<span class="t s sm" style="left:1183px;top:966px">Vue</span>
<span class="t m sm" style="left:1221px;top:966px;letter-spacing:-.9px">1.5%</span>
<div class="dot" style="left:1294px;top:959px;background:#ededed"></div>
<span class="t s sm" style="left:1324px;top:966px;letter-spacing:.4px">Other</span>
<span class="t m sm" style="left:1377px;top:966px;letter-spacing:-.8px">0.2%</span>

<!-- scrollbar -->
<div class="r" style="left:1639px;top:4px;width:23px;height:1307px;background:#fdfdfd"></div>
<svg style="position:absolute;left:1643px;top:12px;width:15px;height:10px"><path fill="#8c8c8c" d="M7.5 0 15 10H0Z"/></svg>
<div class="r" style="left:1644px;top:32px;width:13px;height:1212px;background:#8c8c8c;border-radius:7px"></div>

<!-- frame -->
<div class="r" style="left:0;top:0;width:1666px;height:4px;background:#999"></div>
<div class="r" style="left:0;top:1311px;width:1666px;height:4px;background:#999"></div>
<div class="r" style="left:0;top:0;width:4px;height:1315px;background:#999"></div>
<div class="r" style="left:1662px;top:0;width:4px;height:1315px;background:#999"></div>
</body></html>
